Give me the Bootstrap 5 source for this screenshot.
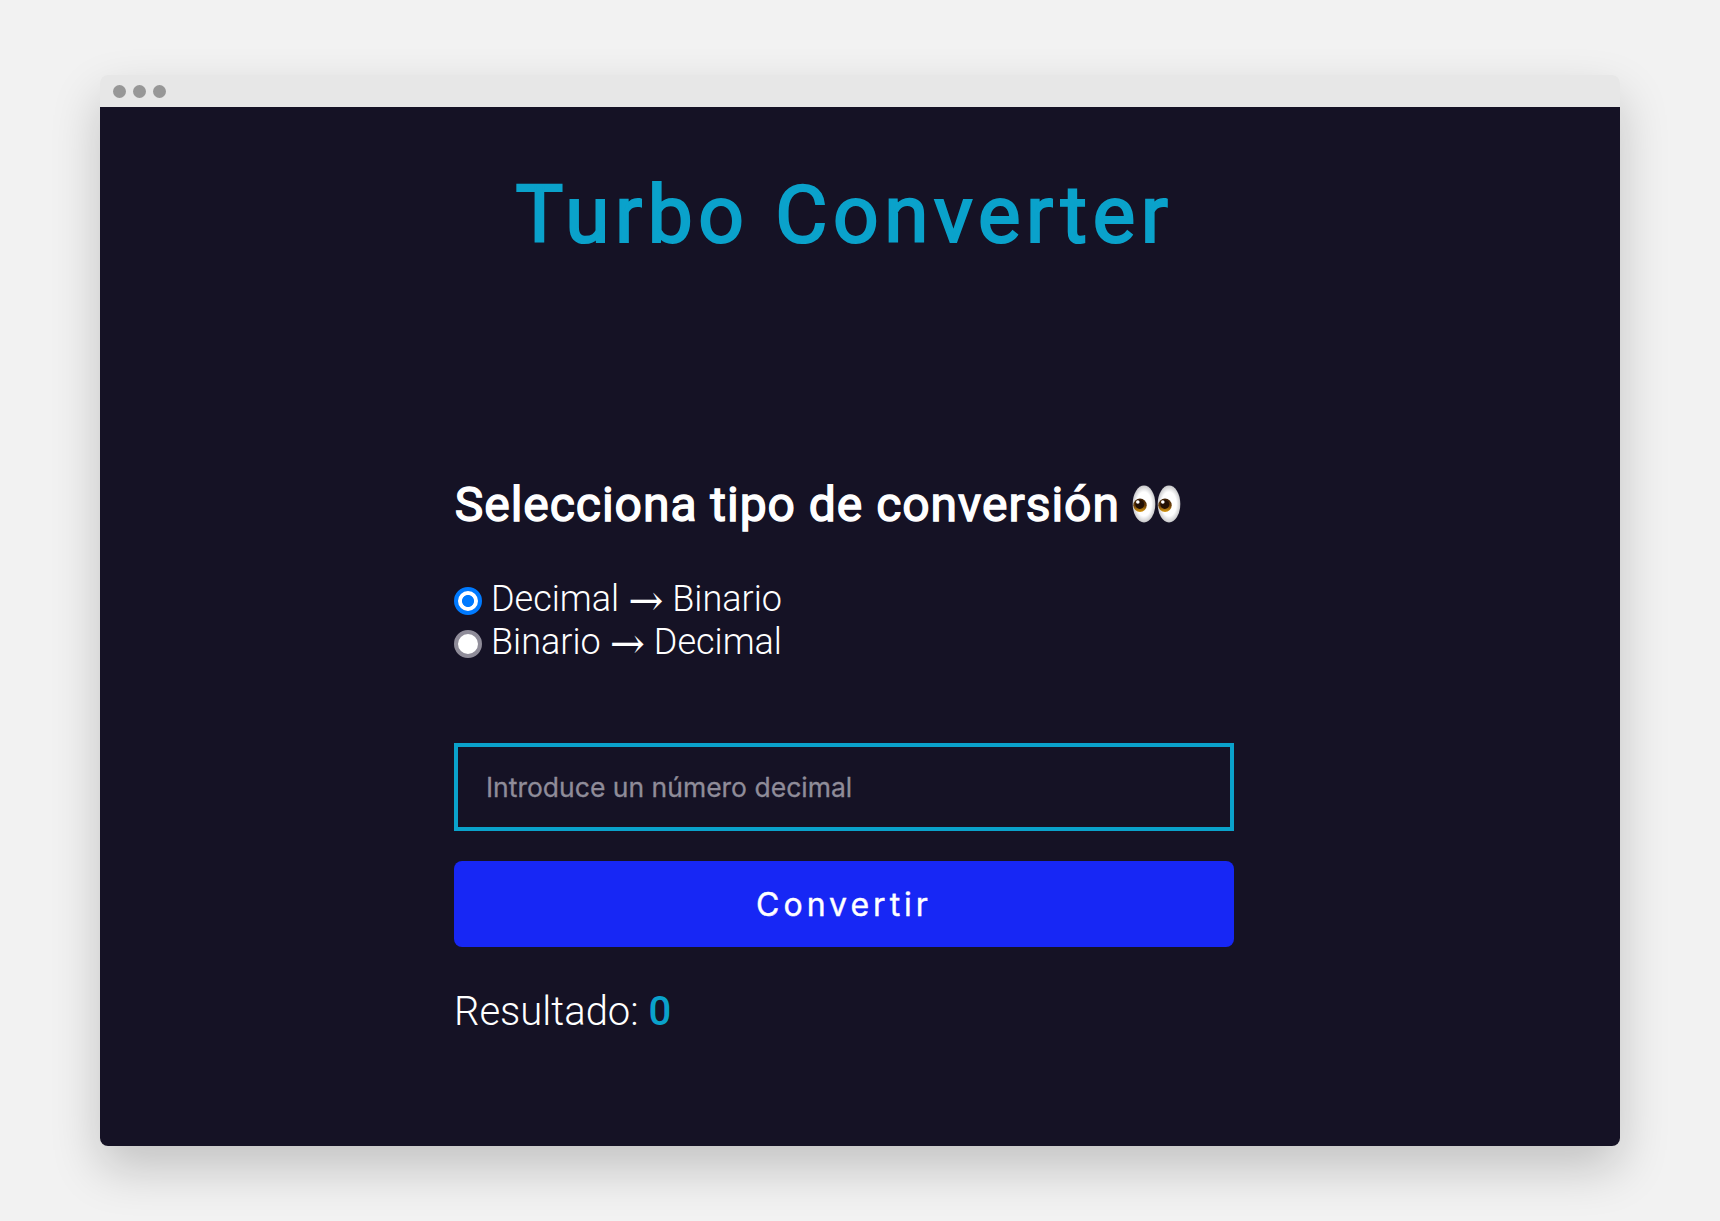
<!DOCTYPE html>
<html lang="es">
<head>
<meta charset="utf-8">
<meta name="viewport" content="width=device-width, initial-scale=1">
<title>Turbo Converter</title>
<link href="https://cdn.jsdelivr.net/npm/bootstrap@5.3.0/dist/css/bootstrap.min.css" rel="stylesheet">
<style>
body{background:#f2f2f2;font-family:Roboto,"Liberation Sans",sans-serif;height:1221px;padding:75px 100px;overflow:hidden}
.win{height:1071px;border-radius:8px;box-shadow:0 22px 50px rgba(0,0,0,.2)}
.win-bar{height:32px;background:#e7e7e7;padding:1px 0 0 13.4px;gap:7px;border-radius:8px 8px 0 0}
.dot{width:13px;height:13px;border-radius:50%;background:#979797}
.app{height:1039px;padding:60px 32px 0 0;color:#fff;background:#151225;border-radius:0 0 8px 8px}
.app-title{font-size:80px;font-weight:400;line-height:96px;height:94px;letter-spacing:5.68px;color:#0aa2cb;-webkit-text-stroke:2.2px #0aa2cb;padding-left:1px}
.panel{width:780px;margin-top:216px}
.panel-title{font-size:48px;font-weight:400;line-height:58px;height:56px;letter-spacing:.97px;-webkit-text-stroke:1.4px #fff;margin-bottom:44px;white-space:nowrap;gap:12px;padding-left:.8px}
.eyes{width:50px;height:40px;margin-bottom:2px;-webkit-text-stroke:0}
.opt{font-size:36px;font-weight:300;line-height:43px;height:43px;gap:9px;white-space:nowrap}
.opt-text{padding-top:1px}
.opt .form-check-input{width:28px;height:28px;margin:4px 0 0;border:4px solid #8f8c99;background:#fff;box-shadow:none;flex:none}
.opt .form-check-input:checked{border-color:#007aff;background:radial-gradient(circle,#007aff 0 5.6px,#fff 6.4px);background-origin:border-box}
.arrow{font-family:"DejaVu Serif",serif;font-size:42px;line-height:0;margin:0 .2px;vertical-align:-4px}
.field{height:88px;margin-top:80px;border:4px solid #0aa2cb;border-radius:0;padding:0 28px;font-family:Inter,sans-serif;font-size:26.5px}
.field,.field:focus{background:transparent;color:#fff;box-shadow:none}
.field::placeholder{color:#8f8c99;opacity:1;-webkit-text-stroke:.3px #8f8c99}
.go{height:86px;margin-top:30px;padding-top:8px;border:0;border-radius:8px;background:#1727f5;font-family:Inter,sans-serif;font-size:32px;font-weight:400;letter-spacing:4px;-webkit-text-stroke:.4px #fff}
.result{font-size:40px;font-weight:300;line-height:47px;margin-top:41px}
.result-value{font-weight:500;color:#0aa2cb}
</style>
</head>
<body>
<div class="win">
  <div class="win-bar d-flex align-items-center"><span class="dot"></span><span class="dot"></span><span class="dot"></span></div>
  <main class="app d-flex flex-column align-items-center">
    <h1 class="app-title mb-0">Turbo Converter</h1>
    <form class="panel">
      <h2 class="panel-title d-flex align-items-center">Selecciona tipo de conversión
        <svg class="eyes" viewBox="0 0 50 40" role="img" aria-label="ojos">
          <defs>
            <radialGradient id="white"><stop offset=".65" stop-color="#fff"/><stop offset="1" stop-color="#c9c9cb"/></radialGradient>
            <linearGradient id="iris" x2="0" y2="1"><stop offset="0" stop-color="#3a1d05"/><stop offset=".55" stop-color="#6d4008"/><stop offset="1" stop-color="#d99b14"/></linearGradient>
          </defs>
          <g id="eye"><ellipse cx="12" cy="20" rx="11.3" ry="18.4" fill="url(#white)"/><circle cx="8" cy="21.2" r="6.7" fill="url(#iris)"/><circle cx="7.8" cy="20.4" r="4.5" fill="#231004"/><circle cx="5.8" cy="18" r="1.8" fill="#fff"/></g>
          <use href="#eye" x="25"/>
        </svg>
      </h2>
      <label class="opt d-flex align-items-center"><input class="form-check-input" type="radio" name="t" checked><span class="opt-text">Decimal <span class="arrow">→</span> Binario</span></label>
      <label class="opt d-flex align-items-center"><input class="form-check-input" type="radio" name="t"><span class="opt-text">Binario <span class="arrow">→</span> Decimal</span></label>
      <input class="form-control field" type="text" placeholder="Introduce un número decimal">
      <button class="btn btn-primary go w-100 d-block" type="button">Convertir</button>
      <p class="result mb-0">Resultado: <span class="result-value">0</span></p>
    </form>
  </main>
</div>
<script src="https://cdn.jsdelivr.net/npm/bootstrap@5.3.0/dist/js/bootstrap.bundle.min.js"></script>
</body>
</html>
